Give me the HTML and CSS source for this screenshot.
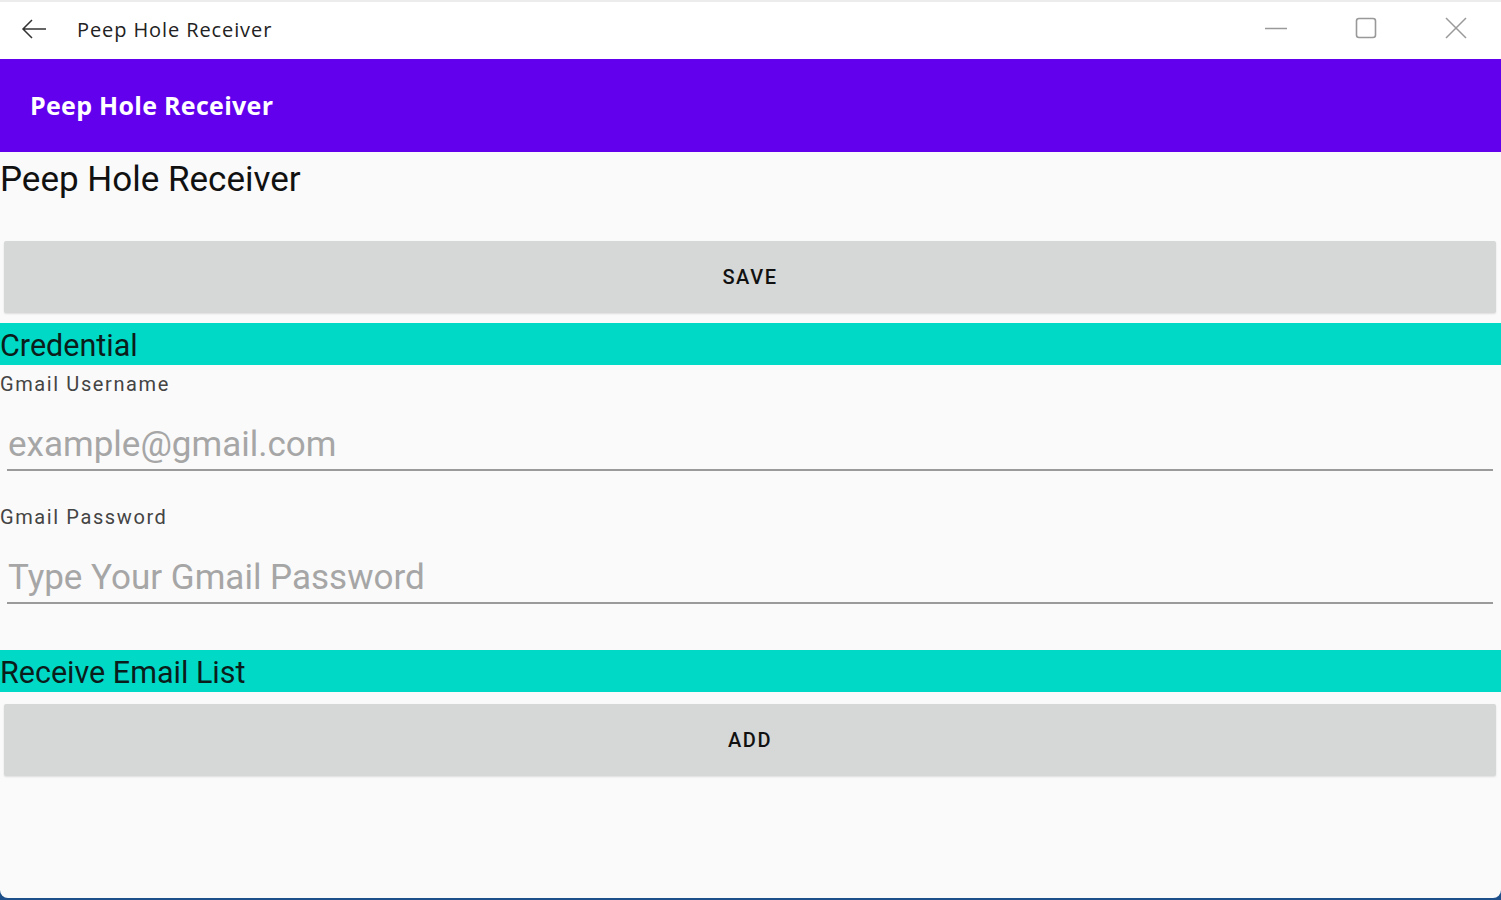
FILE: index.html
```html
<!DOCTYPE html>
<html>
<head>
<meta charset="utf-8">
<link rel="stylesheet" href="styles.css">
</head>
<body>
<div class="window">
  <div class="titlebar">
    <div class="tb-left">
      <svg class="back" width="26" height="22" viewBox="0 0 26 22"><path d="M25 11H2M11 2L2 11l9 9" fill="none" stroke="#333" stroke-width="1.5"/></svg>
      <span class="tb-title">Peep Hole Receiver</span>
    </div>
    <div class="tb-controls">
      <svg width="24" height="24" viewBox="0 0 24 24"><path d="M1 12.5h22" stroke="#999" stroke-width="1.5"/></svg>
      <svg width="24" height="24" viewBox="0 0 24 24"><rect x="2.5" y="2.5" width="19" height="19" rx="2.5" fill="none" stroke="#999" stroke-width="1.6"/></svg>
      <svg width="24" height="24" viewBox="0 0 24 24"><path d="M2 2l20 20M22 2L2 22" stroke="#999" stroke-width="1.5"/></svg>
    </div>
  </div>
  <div class="appbar"><span class="appbar-title">Peep Hole Receiver</span></div>
  <div class="content">
    <div class="page-title">Peep Hole Receiver</div>
    <button class="btn btn-save">SAVE</button>
    <div class="section">Credential</div>
    <div class="label">Gmail Username</div>
    <div class="field"><span class="placeholder">example@gmail.com</span></div>
    <div class="label label-pw">Gmail Password</div>
    <div class="field"><span class="placeholder">Type Your Gmail Password</span></div>
    <div class="section section-list">Receive Email List</div>
    <button class="btn btn-add">ADD</button>
  </div>
</div>
</body>
</html>
```
FILE: styles.css
```css
html, body {
  margin: 0;
  padding: 0;
  background: #1d4f8a;
}
body {
  font-family: Roboto, "Noto Sans", sans-serif;
  width: 1501px;
  height: 900px;
  overflow: hidden;
}
.window {
  width: 1501px;
  height: 898px;
  background: #fafafa;
  border-radius: 0 0 8px 8px;
  overflow: hidden;
  display: flex;
  flex-direction: column;
}
.titlebar {
  height: 57px;
  border-top: 2px solid #ececec;
  background: #ffffff;
  display: flex;
  align-items: center;
  justify-content: space-between;
}
.tb-left {
  display: flex;
  align-items: center;
  padding-left: 21px;
  margin-top: -4px;
}
.back { display: block; }
.tb-title {
  margin-left: 30px;
  font-family: "Open Sans", "Noto Sans", sans-serif;
  font-size: 20px;
  letter-spacing: 0.9px;
  color: #222;
  margin-top: 2px;
}
.tb-controls {
  display: flex;
  align-items: center;
  gap: 66px;
  padding-right: 33px;
  margin-top: -5px;
}
.tb-controls svg { display: block; }
.appbar {
  height: 93px;
  flex-shrink: 0;
  background: #6200ee;
  color: #ffffff;
  display: flex;
  align-items: center;
  padding-left: 30px;
}
.appbar-title {
  font-weight: 700;
  font-size: 25px;
  font-family: "Open Sans", Roboto, sans-serif;
  letter-spacing: 0.3px;
  margin-top: -2px;
}
.content {
  display: flex;
  flex-direction: column;
}
.page-title {
  font-size: 35px;
  color: #111;
  height: 52px;
  line-height: 56px;
  margin-bottom: 37px;
}
.btn {
  display: block;
  margin: 0 5px 0 4px;
  height: 72px;
  border: none;
  background: #d6d7d7;
  font-family: Roboto, sans-serif;
  font-size: 20px;
  font-weight: 500;
  color: #111;
  letter-spacing: 1.6px;
  padding: 0;
  border-radius: 2px;
  box-shadow: 0 1px 2px rgba(0,0,0,0.12);
}
.btn-save { margin-bottom: 10px; }
.section {
  height: 42px;
  background: #00d9c6;
  font-size: 30.5px;
  color: #0b1d1b;
  line-height: 46px;
}
.label {
  font-size: 20px;
  letter-spacing: 1.6px;
  color: #444;
  height: 36px;
  line-height: 38px;
}
.label-pw { margin-top: 27px; }
.field {
  margin: 0 8px 0 7px;
  height: 68px;
  border-bottom: 2px solid #9a9a9a;
  display: flex;
  align-items: center;
}
.placeholder {
  font-size: 35px;
  color: #a6a6a6;
  padding-left: 1px;
  margin-top: 18px;
}
.section-list { margin-top: 46px; margin-bottom: 12px; }
```
